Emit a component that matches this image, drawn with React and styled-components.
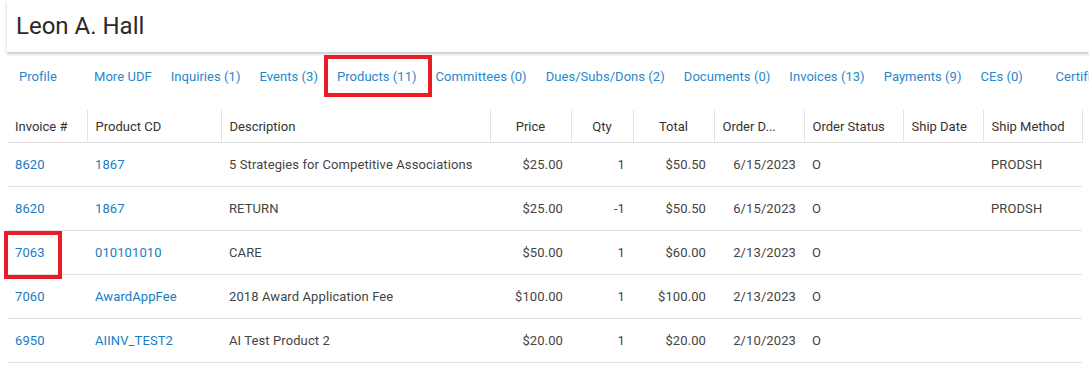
import React from "react";
import styled, { createGlobalStyle } from "styled-components";

const GlobalStyle = createGlobalStyle`
  body {
    margin: 0;
    background: #fff;
    font-family: Roboto, "Liberation Sans", Arial, sans-serif;
    color: #333;
  }
`;

const Page = styled.div`
  width: 1089px;
  height: 370px;
  overflow: hidden;
`;

const TitleCard = styled.div`
  margin-left: 7px;
  height: 52px;
  display: flex;
  align-items: center;
  padding-left: 9px;
  background: #fff;
  box-shadow: 0 2px 3px rgba(0, 0, 0, 0.22);
`;

const Title = styled.h1`
  margin: 0;
  font-size: 24px;
  font-weight: 400;
  color: #2a2a2a;
  line-height: 1;
`;

const TabBar = styled.nav`
  display: flex;
  height: 36px;
  margin-top: 7px;
  padding-left: 9.5px;
  white-space: nowrap;
`;

const Tab = styled.a`
  position: relative;
  display: flex;
  align-items: center;
  min-width: 75px;
  box-sizing: border-box;
  padding: 0 9.5px;
  font-size: 13px;
  letter-spacing: 0.05px;
  color: #2787cb;
  text-decoration: none;
  border-bottom: 2px solid ${(p) => (p.$active ? "#1a78c2" : "transparent")};
  flex-shrink: 0;
`;

const Highlight = styled.span`
  position: absolute;
  border: 4px solid #ec1c24;
  pointer-events: none;
  box-sizing: border-box;
`;

const TabHighlight = styled(Highlight)`
  left: -3px;
  right: -6px;
  top: -4px;
  bottom: -4px;
`;

const CellHighlight = styled(Highlight)`
  left: -3px;
  top: 0;
  width: 58px;
  height: 48px;
`;

const Table = styled.table`
  margin: 15px 0 0 7px;
  border-collapse: collapse;
  table-layout: fixed;
  width: 1075px;
  font-size: 13px;
`;

const Th = styled.th`
  height: 32px;
  padding: 0 8px;
  font-weight: 400;
  color: #333;
  text-align: ${(p) => (p.$align === "right" ? "center" : "left")};
  border-bottom: 1px solid #e0e0e0;
  border-right: 1px solid #e3e3e3;
  white-space: nowrap;
  overflow: hidden;
  text-overflow: ellipsis;
`;

const Td = styled.td`
  position: relative;
  height: 43px;
  padding: 0 8px;
  color: ${(p) => (p.$link ? "#1a7cc2" : "#444")};
  text-align: ${(p) => (p.$align || p.$cell || "left")};
  border-bottom: 1px solid #e0e0e0;
  white-space: nowrap;
  letter-spacing: 0.1px;
`;

const tabs = [
  "Profile",
  "More UDF",
  "Inquiries (1)",
  "Events (3)",
  "Products (11)",
  "Committees (0)",
  "Dues/Subs/Dons (2)",
  "Documents (0)",
  "Invoices (13)",
  "Payments (9)",
  "CEs (0)",
  "Certifications (0)",
];

const columns = [
  { label: "Invoice #", width: 80 },
  { label: "Product CD", width: 134 },
  { label: "Description", width: 269 },
  { label: "Price", width: 81, align: "right" },
  { label: "Qty", width: 62, align: "right" },
  { label: "Total", width: 81, align: "right" },
  { label: "Order Date", width: 90, cell: "right" },
  { label: "Order Status", width: 99 },
  { label: "Ship Date", width: 80 },
  { label: "Ship Method", width: 99 },
];

const rows = [
  ["8620", "1867", "5 Strategies for Competitive Associations", "$25.00", "1", "$50.50", "6/15/2023", "O", "", "PRODSH"],
  ["8620", "1867", "RETURN", "$25.00", "-1", "$50.50", "6/15/2023", "O", "", "PRODSH"],
  ["7063", "010101010", "CARE", "$50.00", "1", "$60.00", "2/13/2023", "O", "", ""],
  ["7060", "AwardAppFee", "2018 Award Application Fee", "$100.00", "1", "$100.00", "2/13/2023", "O", "", ""],
  ["6950", "AIINV_TEST2", "AI Test Product 2", "$20.00", "1", "$20.00", "2/10/2023", "O", "", ""],
];

export default function App() {
  return (
    <Page>
      <GlobalStyle />
      <TitleCard>
        <Title>Leon A. Hall</Title>
      </TitleCard>
      <TabBar>
        {tabs.map((t) => (
          <Tab key={t} $active={t === "Products (11)"}>
            {t}
            {t === "Products (11)" && <TabHighlight />}
          </Tab>
        ))}
      </TabBar>
      <Table>
        <colgroup>
          {columns.map((c) => (
            <col key={c.label} style={{ width: c.width }} />
          ))}
        </colgroup>
        <thead>
          <tr>
            {columns.map((c) => (
              <Th key={c.label} $align={c.align}>
                {c.label === "Order Date" ? "Order D..." : c.label}
              </Th>
            ))}
          </tr>
        </thead>
        <tbody>
          {rows.map((r, i) => (
            <tr key={i}>
              {r.map((v, j) => (
                <Td
                  key={j}
                  $link={j < 2}
                  $align={columns[j].align}
                  $cell={columns[j].cell}
                >
                  {v}
                  {i === 2 && j === 0 && <CellHighlight />}
                </Td>
              ))}
            </tr>
          ))}
        </tbody>
      </Table>
    </Page>
  );
}
